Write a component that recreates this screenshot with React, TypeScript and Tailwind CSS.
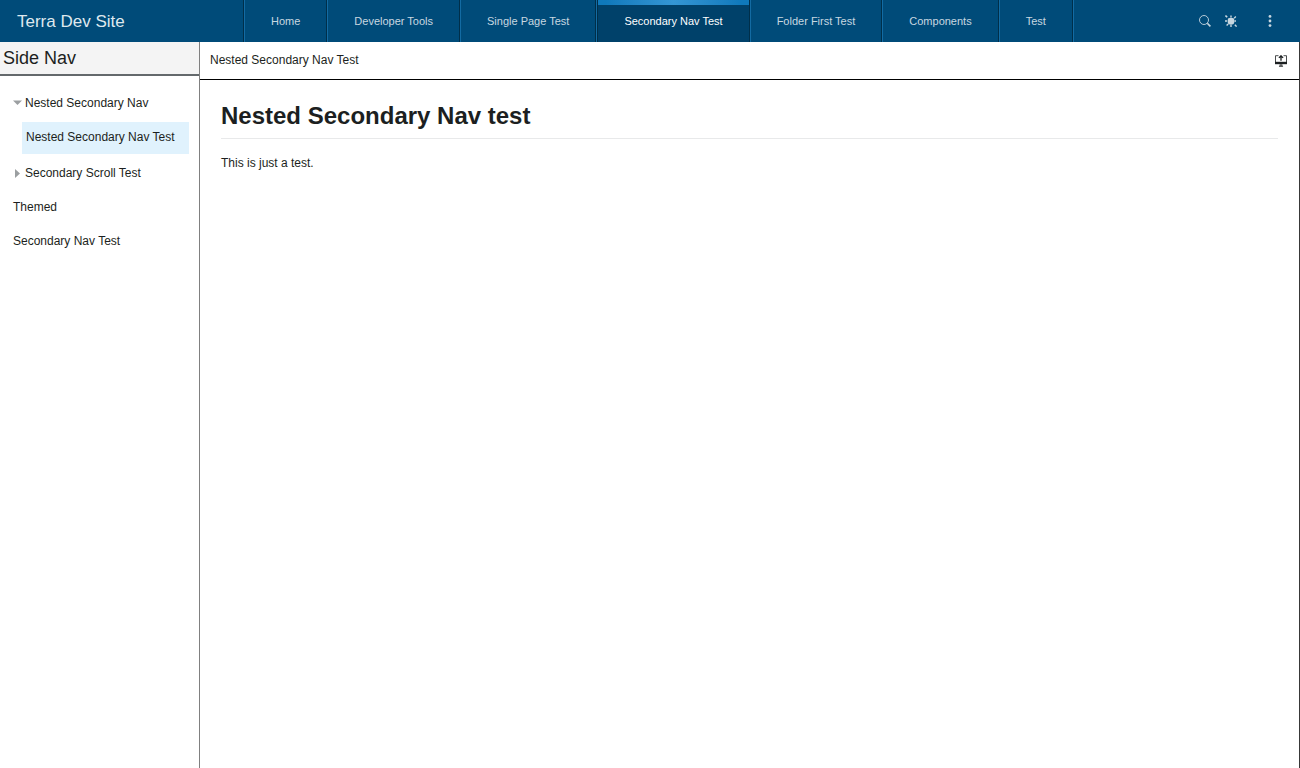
import { useState } from 'react';

const tabs = [
  'Home',
  'Developer Tools',
  'Single Page Test',
  'Secondary Nav Test',
  'Folder First Test',
  'Components',
  'Test',
];

function SearchIcon() {
  return (
    <svg viewBox="0 0 12 12" className="size-3" fill="none" stroke="currentColor" aria-hidden="true">
      <circle cx="5" cy="5" r="4.5" strokeWidth="0.9" />
      <path d="M8.3 8.3 11.4 11.4" strokeWidth="1.6" />
    </svg>
  );
}

function BugIcon() {
  return (
    <svg viewBox="0 0 12 12" className="size-3" fill="none" stroke="currentColor" aria-hidden="true">
      <path
        d="M3 3.6Q6 1.8 9 3.6L9.4 6Q9.4 8 8.6 9Q6 10 3.4 9Q2.6 8 2.6 6Z"
        fill="currentColor"
        stroke="none"
      />
      <path d="M.4 .5 2.2 2.3M0 6H2" strokeWidth="1.6" />
      <path d="M6 .6V2.6M10.8 1.6 9.2 3.2M9.4 6H11M1.6 10.6 3.2 9M6 9.4V12M9.8 9.8 11.6 11.6" strokeWidth="1.4" />
    </svg>
  );
}

function MenuIcon() {
  return (
    <svg viewBox="0 0 12 12" className="size-3" fill="currentColor" aria-hidden="true">
      <circle cx="6" cy="1.4" r="1.4" />
      <circle cx="6" cy="6" r="1.4" />
      <circle cx="6" cy="10.6" r="1.4" />
    </svg>
  );
}

function DisplayIcon() {
  return (
    <svg viewBox="0 0 12 12" className="size-3" fill="none" stroke="currentColor" aria-hidden="true">
      <path d="M3.5 .7H.5V7M8.5 .7H11.5V7" strokeWidth="0.8" />
      <path d="M0 6.8H12V9.2H0Z" fill="currentColor" stroke="none" />
      <path d="M4.8 9.2H7.2L8.2 11.9H3.8Z" fill="currentColor" stroke="none" opacity="0.7" />
      <path d="M6 1V5.8M3.9 2.9 6 .8 8.1 2.9" strokeWidth="1.3" />
    </svg>
  );
}

export default function App() {
  const [active, setActive] = useState('Secondary Nav Test');
  const [open, setOpen] = useState(true);

  return (
    <div className="flex h-screen flex-col bg-white font-['Liberation_Sans',Arial,sans-serif] text-xs text-[#1c1f21]">
      <header className="flex h-[42px] shrink-0 bg-[#004b79] text-[#c8d7e0]">
        <div className="flex w-[243px] shrink-0 items-center pt-0.5 pl-[17px] text-[17px] text-[#dfe8ee]">
          Terra Dev Site
        </div>
        <nav aria-label="Primary" className="flex border-x border-l-[#002f4a] border-r-[#136ba3]">
          {tabs.map((tab) => {
            const selected = tab === active;
            return (
              <div key={tab} className="flex border-l border-[#136ba3]">
                <button
                  type="button"
                  aria-current={selected ? 'page' : undefined}
                  onClick={() => setActive(tab)}
                  className={
                    selected
                      ? 'flex flex-col items-center border-x border-[#002f4a] bg-[#00416a] text-[11px] text-white'
                      : 'flex flex-col items-center border-r border-[#002f4a] text-[11px]'
                  }
                >
                  <span
                    className={
                      selected
                        ? 'h-[5px] w-full bg-linear-to-r from-[#0f79bb] from-5% via-[#3496d4] to-[#0f79bb] to-95%'
                        : 'h-[5px] w-full'
                    }
                  />
                  <span className="px-[26px] pt-2 leading-4">{tab}</span>
                </button>
              </div>
            );
          })}
        </nav>
        <div className="ml-auto flex items-center pr-6">
          <button type="button" aria-label="Search">
            <SearchIcon />
          </button>
          <button type="button" aria-label="Report an issue" className="ml-[14px]">
            <BugIcon />
          </button>
          <button type="button" aria-label="More" className="ml-[27px]">
            <MenuIcon />
          </button>
        </div>
      </header>

      <div className="flex min-h-0 flex-1">
        <aside className="w-[200px] shrink-0 border-r border-[#808080]">
          <h2 className="border-b-2 border-[#64696c] bg-[#f4f4f4] px-[3px] py-1 text-lg leading-6">
            Side Nav
          </h2>
          <nav aria-label="Secondary" className="flex flex-col px-[10px] pt-[10px]">
            <button
              type="button"
              aria-expanded={open}
              onClick={() => setOpen(!open)}
              className="flex h-[34px] items-center gap-[3px] pl-[3px] text-left"
            >
              <svg viewBox="0 0 9 9" className="size-[9px]" fill="#9b9fa1" aria-hidden="true">
                <path d={open ? 'M0 1.5H9L4.5 6Z' : 'M2 0V9L7 4.5Z'} />
              </svg>
              Nested Secondary Nav
            </button>
            {open && (
              <a
                href="#nested"
                aria-current="page"
                className="my-0.5 ml-3 flex h-8 items-center bg-[#e0f2fd] pb-0.5 pl-1"
              >
                Nested Secondary Nav Test
              </a>
            )}
            <button
              type="button"
              aria-expanded="false"
              className="flex h-[34px] items-center gap-[3px] pl-[3px] text-left"
            >
              <svg viewBox="0 0 9 9" className="size-[9px]" fill="#9b9fa1" aria-hidden="true">
                <path d="M2 0V9L7 4.5Z" />
              </svg>
              Secondary Scroll Test
            </button>
            <a href="#themed" className="flex h-[34px] items-center pl-[3px]">
              Themed
            </a>
            <a href="#secondary" className="flex h-[34px] items-center pl-[3px]">
              Secondary Nav Test
            </a>
          </nav>
        </aside>

        <main className="min-w-0 flex-1 border-r border-[#383838]">
          <div className="flex h-[38px] items-center justify-between border-b border-black pr-3 pl-[10px]">
            <span className="pb-0.5">Nested Secondary Nav Test</span>
            <button type="button" aria-label="Display settings">
              <DisplayIcon />
            </button>
          </div>
          <article className="px-[21px] pt-[21px]">
            <h1 className="border-b border-[#e8e9ea] pb-2 text-2xl leading-[29px] font-bold">
              Nested Secondary Nav test
            </h1>
            <p className="mt-4 leading-4">This is just a test.</p>
          </article>
        </main>
      </div>
    </div>
  );
}
